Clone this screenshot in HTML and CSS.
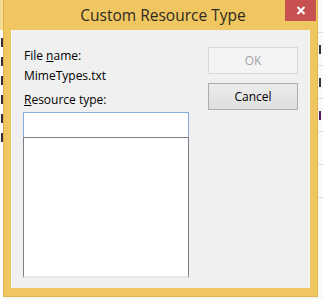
FILE: index.html
```html
<!DOCTYPE html>
<html lang="en">
  <head>
    <meta charset="UTF-8" />
    <title>Custom Resource Type</title>
    <link rel="stylesheet" href="styles.css">
  </head>
  <body>
    <div class="edge edge--left">
      <i class="mark"></i><i class="mark"></i><i class="mark"></i><i class="mark"></i><i class="mark"></i><i class="mark"></i>
    </div>
    <div class="window">
      <div class="titlebar">
        <div class="titlebar--spacer"></div>
        <div class="titlebar--title">Custom Resource Type</div>
        <div class="titlebar--close">
          <svg width="10" height="9" viewBox="0 0 10 9">
            <path d="M1.5 1 L8.5 8 M8.5 1 L1.5 8" stroke="#fff" stroke-width="2" />
          </svg>
        </div>
      </div>
      <div class="client">
        <div class="left--column">
          <div class="label label--first">File <u>n</u>ame:</div>
          <div class="label label--second">MimeTypes.txt</div>
          <div class="label label--third"><u>R</u>esource type:</div>
          <div class="combo">
            <div class="combo--edit"></div>
            <div class="combo--list"></div>
          </div>
        </div>
        <div class="right--column">
          <button class="button button--disabled" disabled>OK</button>
          <button class="button">Cancel</button>
        </div>
      </div>
    </div>
    <div class="edge edge--right">
      <div class="edge--row"></div>
      <div class="edge--row"><i class="mark"></i></div>
      <div class="edge--row"><i class="mark"></i></div>
      <div class="edge--row"><i class="mark mark--purple"></i></div>
      <div class="edge--row"></div>
      <div class="edge--row"></div>
    </div>
  </body>
</html>
```

FILE: styles.css
```css
* {
  box-sizing: border-box;
}

html,
body {
  margin: 0;
  height: 299px;
  width: 323px;
  overflow: hidden;
}

body {
  display: flex;
  background-color: #f5f5f5;
  font-family: "Open Sans", "Noto Sans", sans-serif;
  font-size: 12px;
  color: #000;
}

.edge {
  overflow: hidden;
  flex: none;
}

.mark {
  display: block;
  width: 2px;
  height: 9px;
  background-color: #333;
}

.mark--purple {
  background-color: #5a1a5a;
}

.edge--left {
  width: 3px;
  display: flex;
  flex-direction: column;
  gap: 10px;
  padding-top: 38px;
  padding-left: 1px;
  background: linear-gradient(#f5da92 0 30px, #ffffff 30px);
}

.edge--right {
  width: 5px;
  height: 299px;
  background-color: #fafafa;
}

.edge--row {
  height: 33px;
  border-bottom: 1px solid #dcdcdc;
  padding-top: 12px;
  padding-left: 1px;
}

.window {
  flex: none;
  width: 315px;
  height: 297px;
  display: flex;
  flex-direction: column;
  padding: 0 7px 8px 7px;
  background-color: #f0c660;
  border-left: 1px solid #e2b44c;
  border-right: 1px solid #e2b44c;
  border-bottom: 1px solid #e2b44c;
}

.titlebar {
  height: 30px;
  display: flex;
  align-items: flex-start;
  margin-left: -7px;
  margin-right: -6px;
  padding-left: 6px;
}

.titlebar--spacer {
  width: 31px;
}

.titlebar--title {
  flex: 1;
  text-align: center;
  padding-top: 5px;
  font-size: 15.5px;
  line-height: 20px;
  color: #2e2a22;
}

.titlebar--close {
  width: 31px;
  height: 21px;
  display: flex;
  align-items: center;
  justify-content: center;
  background-color: #c75050;
}

.client {
  flex: 1;
  display: flex;
  background-color: #f0f0f0;
  border-left: 1px solid #f8f8f8;
  border-right: 1px solid #f8f8f8;
}

.left--column {
  width: 178px;
  padding-left: 11px;
  display: flex;
  flex-direction: column;
}

.label {
  line-height: 15px;
  padding-left: 1px;
}

.label--first {
  margin-top: 18px;
}

.label--second {
  margin-top: 5px;
}

.label--third {
  margin-top: 9px;
}

.combo {
  margin-top: 5px;
  width: 166px;
  display: flex;
  flex-direction: column;
}

.combo--edit {
  height: 25px;
  background-color: #fff;
  border: 1px solid #86aedb;
  border-bottom: none;
}

.combo--list {
  height: 141px;
  background-color: #fff;
  border: 1px solid #7c7f85;
  border-bottom: 2px solid #e6e6e6;
}

.right--column {
  margin-left: 18px;
  padding-top: 17px;
  display: flex;
  flex-direction: column;
  gap: 9px;
}

.button {
  width: 90px;
  height: 27px;
  padding: 0;
  font-family: inherit;
  font-size: 12px;
  color: #000;
  background: linear-gradient(#ececec, #dedede);
  border: 1px solid #acacac;
}

.button--disabled {
  color: #a3a3a3;
  background: #f4f4f4;
  border-color: #d9d9d9;
}
```
